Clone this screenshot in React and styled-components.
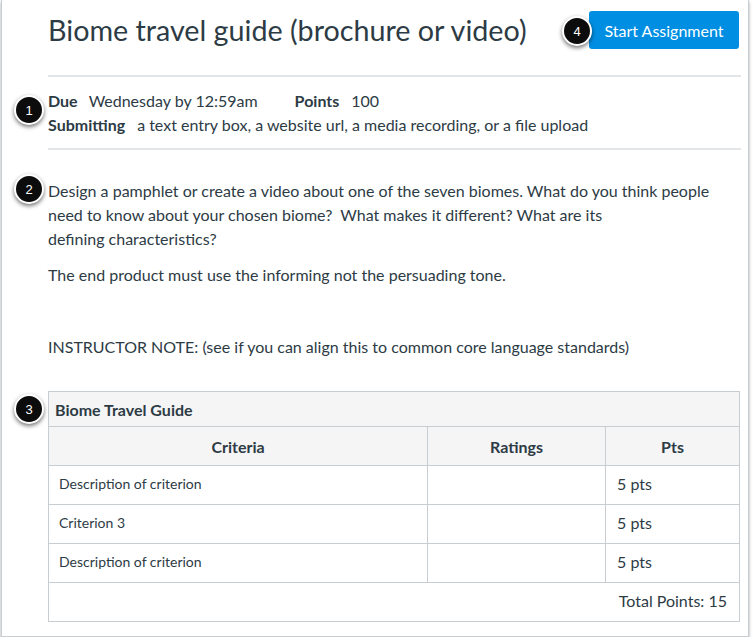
import React from "react";
import styled, { createGlobalStyle } from "styled-components";

const GlobalStyle = createGlobalStyle`
  html, body {
    margin: 0;
    padding: 0;
    background: #ffffff;
  }
  body {
    font-family: Lato, "Open Sans", sans-serif;
    color: #2d3b45;
  }
  * { box-sizing: border-box; }
`;

const Frame = styled.div`
  position: relative;
  margin-left: 1px;
  width: 748px;
  height: 637px;
  border: 1px solid #c7cdd1;
  border-top: none;
  box-shadow: 0 2px 3px rgba(0, 0, 0, 0.35);
  padding: 11px 8px 0 46px;
`;

const Header = styled.header`
  display: flex;
  justify-content: space-between;
  align-items: center;
  height: 38px;
`;

const Title = styled.h1`
  margin: 0;
  font-size: 28.7px;
  font-weight: 400;
  line-height: 38px;
  color: #2d3b45;
`;

const Button = styled.button`
  height: 38px;
  padding: 0 15.5px;
  border: none;
  border-radius: 3px;
  background: #008ee2;
  color: #ffffff;
  font-family: Lato, sans-serif;
  font-size: 16px;
  margin-right: 1px;
`;

const Rule = styled.hr`
  margin: ${(p) => p.$m || "0"};
  border: none;
  border-top: 2px solid #e3e6e8;
  margin-right: -1px;
`;

const Details = styled.div`
  padding: 12px 0 11px;
`;

const DetailRow = styled.div`
  display: flex;
  font-size: 16px;
  line-height: 24px;
`;

const Label = styled.span`
  font-weight: 700;
  margin-right: ${(p) => p.$gap || "12px"};
`;

const Value = styled.span`
  margin-right: ${(p) => p.$gap || "0"};
`;

const Description = styled.div`
  padding-top: 29px;
  font-size: 16px;
  line-height: 24px;
`;

const Para = styled.p`
  margin: 0 0 12px;
  min-height: 24px;
`;

const Rubric = styled.table`
  margin-top: 32px;
  width: 692px;
  border-collapse: collapse;
  border: 1px solid #c7cdd1;
  table-layout: fixed;
`;

const RubricTitle = styled.th`
  height: 35px;
  padding: 0 6px;
  text-align: left;
  font-size: 16px;
  font-weight: 700;
  background: #f5f5f5;
  border-bottom: 1px solid #c7cdd1;
`;

const ColHead = styled.th`
  height: 39px;
  font-size: 16px;
  font-weight: 700;
  text-align: center;
  background: #f5f5f5;
  border: 1px solid #c7cdd1;
`;

const Cell = styled.td`
  height: 39px;
  padding: 0 11px 3px ${(p) => (p.$big ? "11px" : "10px")};
  font-size: ${(p) => (p.$big ? "16px" : "14px")};
  border: 1px solid #c7cdd1;
  text-align: ${(p) => (p.$right ? "right" : "left")};
  padding-right: ${(p) => (p.$right ? "12px" : "11px")};
`;

const Badge = styled.div`
  position: absolute;
  left: ${(p) => p.$x}px;
  top: ${(p) => p.$y}px;
  width: 30px;
  height: 30px;
  border-radius: 50%;
  background: #0c0c0c;
  border: 2px solid #ffffff;
  box-shadow: 0 2px 4px rgba(0, 0, 0, 0.55);
  color: #ffffff;
  font-family: "Liberation Sans", Arial, sans-serif;
  font-size: 13px;
  display: flex;
  align-items: center;
  justify-content: center;
`;

const criteria = [
  { name: "Description of criterion", pts: "5 pts" },
  { name: "Criterion 3", pts: "5 pts" },
  { name: "Description of criterion", pts: "5 pts" },
];

export default function App() {
  return (
    <>
      <GlobalStyle />
      <Frame>
        <Header>
          <Title>Biome travel guide (brochure or video)</Title>
          <Button>Start Assignment</Button>
        </Header>
        <Rule $m="26px 0 0" />
        <Details>
          <DetailRow>
            <Label $gap="11px">Due</Label>
            <Value $gap="37px">Wednesday by 12:59am</Value>
            <Label>Points</Label>
            <Value>100</Value>
          </DetailRow>
          <DetailRow>
            <Label>Submitting</Label>
            <Value>
              a text entry box, a website url, a media recording, or a file
              upload
            </Value>
          </DetailRow>
        </Details>
        <Rule />
        <Description>
          <Para>
            Design a pamphlet or create a video about one of the seven biomes.
            What do you think people
            <br />
            need to know about your chosen biome?&nbsp; What makes it
            different? What are its
            <br />
            defining characteristics?
          </Para>
          <Para>
            The end product must use the informing not the persuading tone.
          </Para>
          <Para />
          <Para>
            INSTRUCTOR NOTE: (see if you can align this to common core language
            standards)
          </Para>
        </Description>
        <Rubric>
          <colgroup>
            <col style={{ width: "379px" }} />
            <col style={{ width: "178px" }} />
            <col />
          </colgroup>
          <thead>
            <tr>
              <RubricTitle colSpan={3}>Biome Travel Guide</RubricTitle>
            </tr>
            <tr>
              <ColHead>Criteria</ColHead>
              <ColHead>Ratings</ColHead>
              <ColHead>Pts</ColHead>
            </tr>
          </thead>
          <tbody>
            {criteria.map((c, i) => (
              <tr key={i}>
                <Cell>{c.name}</Cell>
                <Cell />
                <Cell $big>{c.pts}</Cell>
              </tr>
            ))}
            <tr>
              <Cell colSpan={3} $big $right>
                Total Points: 15
              </Cell>
            </tr>
          </tbody>
        </Rubric>
        <Badge $x={12} $y={95}>1</Badge>
        <Badge $x={12} $y={174}>2</Badge>
        <Badge $x={12} $y={394}>3</Badge>
        <Badge $x={560} $y={16}>4</Badge>
      </Frame>
    </>
  );
}
